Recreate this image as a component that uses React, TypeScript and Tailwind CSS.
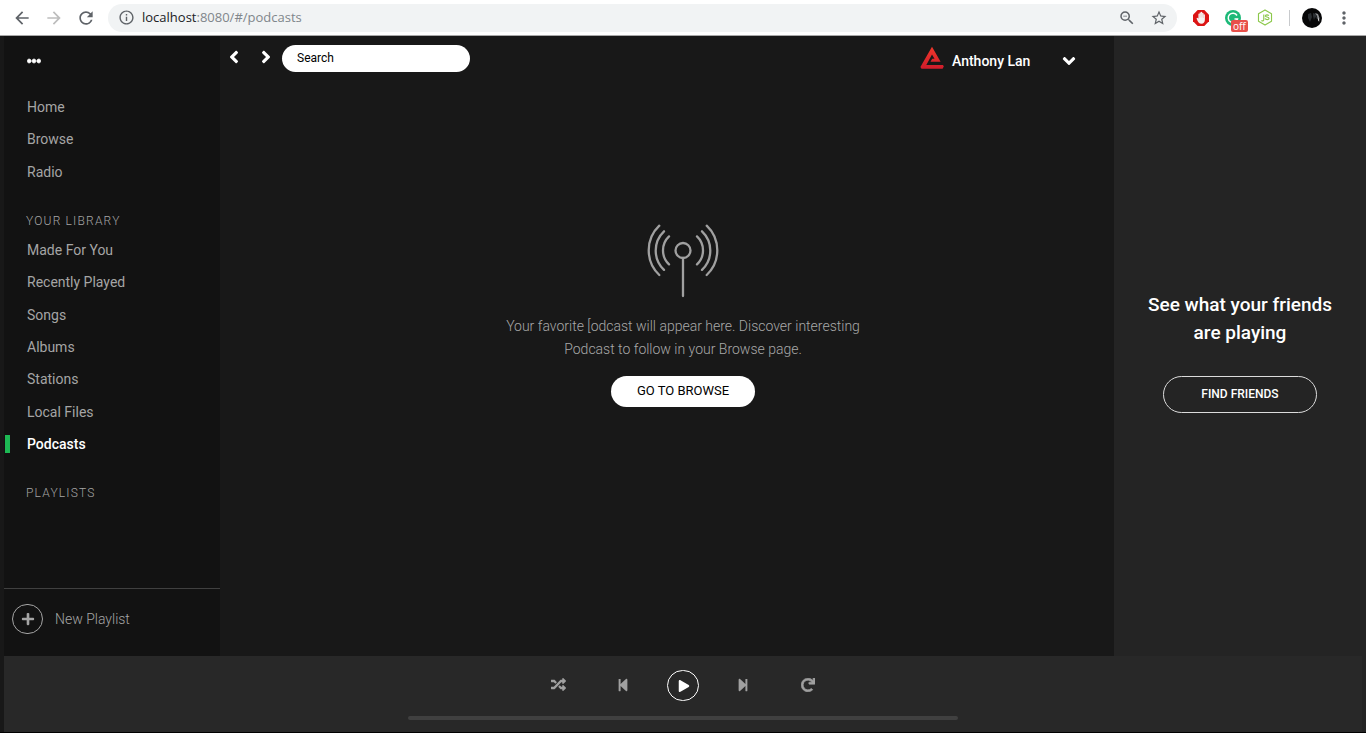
import React from "react";
import {
  MdArrowBack,
  MdArrowForward,
  MdRefresh,
  MdInfoOutline,
  MdZoomOut,
  MdStarBorder,
  MdMoreVert,
} from "react-icons/md";
import {
  FaEllipsisH,
  FaAngleLeft,
  FaAngleRight,
  FaAngleDown,
  FaRandom,
  FaRedo,
  FaStepBackward,
  FaStepForward,
  FaPlay,
  FaPlus,
} from "react-icons/fa";

function BlockerIcon() {
  return (
    <svg viewBox="0 0 16 16" className="size-4">
      <path d="M4.7 0h6.6L16 4.7v6.6L11.3 16H4.7L0 11.3V4.7z" fill="#dc1414" />
      <path
        d="M3.600 8.400c0-.9 1-1 1.500-.2l.3.500V4.200c0-.8 1.200-.8 1.200 0V2.900c0-.9 1.300-.9 1.300 0v-.4c0-.9 1.300-.9 1.300 0v.8c0-.9 1.300-.8 1.300 0v1.500c0-.8 1.400-.8 1.400 0v4.800c0 2.400-1.100 4.200-3.500 4.200-2.200 0-3.200-1.600-4-3.400z"
        fill="#f6f3f1"
      />
      <path d="M6.600 4.500v3M7.900 3v4.500M9.200 3.500v4M10.500 5v3" stroke="#e09a98" strokeWidth=".3" />
    </svg>
  );
}

function GrammarIcon() {
  return (
    <svg viewBox="0 0 16 16" className="size-4">
      <circle cx="8" cy="8" r="8" fill="#1cb978" />
      <path d="M12 5.500A4.700 4.700 0 1 0 12.500 9H9.500" fill="none" stroke="#fff" strokeWidth="1.500" />
    </svg>
  );
}

function NodeIcon() {
  return (
    <svg viewBox="0 0 16 18" className="h-[17px] w-4" fill="none" stroke="#8cc84b" strokeWidth="1.200">
      <path d="M8 1l6.900 4v8L8 17l-6.900-4V5z" strokeLinejoin="round" />
      <path d="M6.700 5.700v5.600c0 1.400-1.300 1.600-2.500.8M12 7.200c-.6-1.300-3.600-1.300-3.600.1 0 1.700 3.900.7 3.900 2.700 0 1.700-3.700 1.700-4.100-.1" />
    </svg>
  );
}

function BrowserAvatar() {
  return (
    <svg viewBox="0 0 20 20" className="size-5">
      <circle cx="10" cy="10" r="10" fill="#070708" />
      <path d="M6 6l3-1 1 4-2 5-2-4zM11 5l3 1 1 5-2-2-1 3-1-4z" fill="#2b2f33" />
      <path d="M13 5l3 1 1.500 4-.5 2-1.500-1-.5-3z" fill="#8b8d90" />
      <path d="M16 10l1 1 .3 2.500-1-.5z" fill="#e8e8e8" />
    </svg>
  );
}

function ProfileLogo() {
  return (
    <svg viewBox="0 0 24 24" className="size-6">
      <defs>
        <linearGradient id="logoRed" x1="0" y1="0" x2="0" y2="1">
          <stop offset="0" stopColor="#f0382b" />
          <stop offset="1" stopColor="#cf1c2b" />
        </linearGradient>
      </defs>
      <path
        d="M12 .8l8.600 15H10.500l1.700-3h2.300L12 8.600 6.300 18.900H23l.8 1.600-1.200 2.300H1.500L.4 21z"
        fill="url(#logoRed)"
      />
    </svg>
  );
}

function AntennaIcon() {
  return (
    <svg
      viewBox="0 0 76 76"
      className="size-[76px]"
      fill="none"
      stroke="#a0a0a0"
      strokeWidth="2.300"
      strokeLinecap="round"
    >
      <circle cx="38" cy="27.500" r="7.500" />
      <path d="M38 35v38" />
      <path d="M14.300 2.700a34 34 0 0 0 0 49.300M19 8.300a26.600 26.600 0 0 0 0 38.600M24 13.400a19.300 19.300 0 0 0 0 28" />
      <path d="M61.700 2.700a34 34 0 0 1 0 49.300M57 8.300a26.600 26.600 0 0 1 0 38.600M52 13.400a19.300 19.300 0 0 1 0 28" />
    </svg>
  );
}

function BrowserBar() {
  return (
    <div className="flex h-9 items-center border-b border-[#a8a8a8] bg-white px-3 text-[#5f6368]">
      <button aria-label="Back" className="flex w-8 shrink-0">
        <MdArrowBack size={20} />
      </button>
      <button aria-label="Forward" className="flex w-8 shrink-0 text-[#bdbdbd]">
        <MdArrowForward size={20} />
      </button>
      <button aria-label="Reload" className="flex w-8 shrink-0">
        <MdRefresh size={20} />
      </button>
      <div className="flex h-7 flex-1 items-center rounded-full bg-[#f1f3f4] pr-0.5 pl-2.5">
        <MdInfoOutline size={17} />
        <p className="flex-1 pl-[7px] font-['Open_Sans',sans-serif] text-[13px] text-[#80868b]">
          <span className="text-[#202124]">localhost</span>:8080/#/podcasts
        </p>
        <button aria-label="Zoom" className="flex w-8 justify-center">
          <MdZoomOut size={18} />
        </button>
        <button aria-label="Bookmark" className="flex w-8 justify-center">
          <MdStarBorder size={18} />
        </button>
      </div>
      <div className="flex items-center pl-4">
        <button aria-label="Ad blocker" className="w-8">
          <BlockerIcon />
        </button>
        <button aria-label="Grammar checker" className="relative w-8">
          <GrammarIcon />
          <span className="absolute top-2.5 left-1.5 rounded-xs bg-[#e8504a] px-0.5 font-['Open_Sans',sans-serif] text-[10px] leading-3 text-white">
            off
          </span>
        </button>
        <button aria-label="Node" className="w-8">
          <NodeIcon />
        </button>
        <span className="h-4 w-px bg-[#c8cacd]" />
        <button aria-label="Account" className="ml-3">
          <BrowserAvatar />
        </button>
        <button aria-label="Menu" className="ml-3">
          <MdMoreVert size={20} />
        </button>
      </div>
    </div>
  );
}

const mainLinks = ["Home", "Browse", "Radio"];
const libraryLinks = [
  "Made For You",
  "Recently Played",
  "Songs",
  "Albums",
  "Stations",
  "Local Files",
  "Podcasts",
];

function NavLink({ label }: { label: string }) {
  const active = label === "Podcasts";
  return (
    <li className="flex items-center">
      <a
        href={"#/" + label.toLowerCase().replace(/ /g, "-")}
        className={
          active
            ? "ml-px border-l-[5px] border-[#1db954] pl-[17px] leading-[18px] font-medium text-white"
            : "pl-[23px] leading-[18px]"
        }
      >
        {label}
      </a>
    </li>
  );
}

function Sidebar() {
  return (
    <nav className="flex w-[216px] shrink-0 flex-col bg-[#121212] text-[#a5a5a5]">
      <div className="flex h-[55px] items-center pb-1.5 pl-[23px]">
        <button aria-label="More" className="text-white">
          <FaEllipsisH size={14} stroke="currentColor" strokeWidth={24} />
        </button>
      </div>
      <ul className="grid h-[97px] auto-rows-fr text-sm">
        {mainLinks.map((l) => (
          <NavLink key={l} label={l} />
        ))}
      </ul>
      <h2 className="mt-[25px] pl-[22px] text-xs leading-4 font-light tracking-widest">YOUR LIBRARY</h2>
      <ul className="mt-[5px] grid h-[226px] auto-rows-fr text-sm">
        {libraryLinks.map((l) => (
          <NavLink key={l} label={l} />
        ))}
      </ul>
      <h2 className="mt-[25px] pl-[22px] text-xs leading-4 font-light tracking-widest">PLAYLISTS</h2>
      <button className="mt-auto flex h-[68px] items-center gap-3 border-t border-[#404040] pb-2 pl-2 text-sm font-light">
        <span className="flex h-[30px] w-[31px] items-center justify-center rounded-full border border-[#a5a5a5]">
          <FaPlus size={14} />
        </span>
        New Playlist
      </button>
    </nav>
  );
}

function TopBar() {
  return (
    <header className="flex items-start pt-[9px] text-white">
      <button aria-label="Previous page" className="flex h-6 w-8 items-center pl-1">
        <FaAngleLeft size={20} />
      </button>
      <button aria-label="Next page" className="flex h-6 w-[30px] items-center pl-1">
        <FaAngleRight size={20} />
      </button>
      <input
        type="search"
        aria-label="Search"
        placeholder="Search"
        className="h-[27px] w-[188px] rounded-full bg-white px-[15px] pb-0.5 text-xs text-black placeholder:text-black"
      />
      <button className="mr-[35px] ml-auto flex h-8 items-center text-sm font-medium">
        <span className="pb-1.5">
          <ProfileLogo />
        </span>
        <span className="w-[115px] pl-2 text-left">Anthony Lan</span>
        <FaAngleDown size={20} />
      </button>
    </header>
  );
}

function Content() {
  return (
    <main className="flex flex-1 flex-col">
      <TopBar />
      <section className="flex flex-col items-center pt-[146px] pl-8 text-center">
        <AntennaIcon />
        <p className="mt-4 w-[380px] text-sm leading-[23px] font-light text-[#a8a8a8]">
          Your favorite [odcast will appear here. Discover interesting Podcast to follow in your Browse page.
        </p>
        <button className="mt-[15px] h-[31px] w-36 rounded-full bg-white pb-0.5 text-[13px] text-black">
          GO TO BROWSE
        </button>
      </section>
    </main>
  );
}

function FriendsPanel() {
  return (
    <aside className="flex w-[252px] shrink-0 flex-col items-center bg-[#242424] px-8 pt-[255px] text-center text-white">
      <h2 className="text-[19px] leading-7 font-medium">See what your friends are playing</h2>
      <button className="mt-[29px] h-[37px] w-[154px] rounded-full border border-[#dcdcdc] pb-0.5 text-xs font-medium">
        FIND FRIENDS
      </button>
    </aside>
  );
}

function Player() {
  return (
    <div className="bg-[#242424] pr-1">
      <footer className="flex flex-col items-center bg-[#282828] pt-3.5 pb-3">
        <div className="flex h-[31px] items-center text-[#a0a0a0]">
          <button aria-label="Shuffle" className="flex w-[70px] justify-center pb-0.5">
            <FaRandom size={15} />
          </button>
          <button aria-label="Previous" className="flex w-[60px] justify-center pb-0.5">
            <FaStepBackward size={14} />
          </button>
          <div className="flex w-[60px] justify-center">
            <button
              aria-label="Play"
              className="flex h-[31px] w-8 items-center justify-center rounded-full border border-white pl-0.5 text-white"
            >
              <FaPlay size={12} />
            </button>
          </div>
          <button aria-label="Next" className="flex w-[60px] justify-center pb-0.5">
            <FaStepForward size={14} />
          </button>
          <button aria-label="Repeat" className="flex w-[70px] justify-center pb-0.5">
            <FaRedo size={14} stroke="currentColor" strokeWidth={24} />
          </button>
        </div>
        <div className="mt-[15px] h-1 w-[550px] max-w-full rounded-full bg-[#404040]" />
      </footer>
    </div>
  );
}

export default function App() {
  return (
    <div className="flex min-h-screen flex-col bg-[#181818] font-['Roboto',sans-serif]">
      <BrowserBar />
      <div className="flex flex-1 flex-col border-b border-black pl-1">
        <div className="flex flex-1">
          <Sidebar />
          <Content />
          <FriendsPanel />
        </div>
        <Player />
      </div>
    </div>
  );
}
